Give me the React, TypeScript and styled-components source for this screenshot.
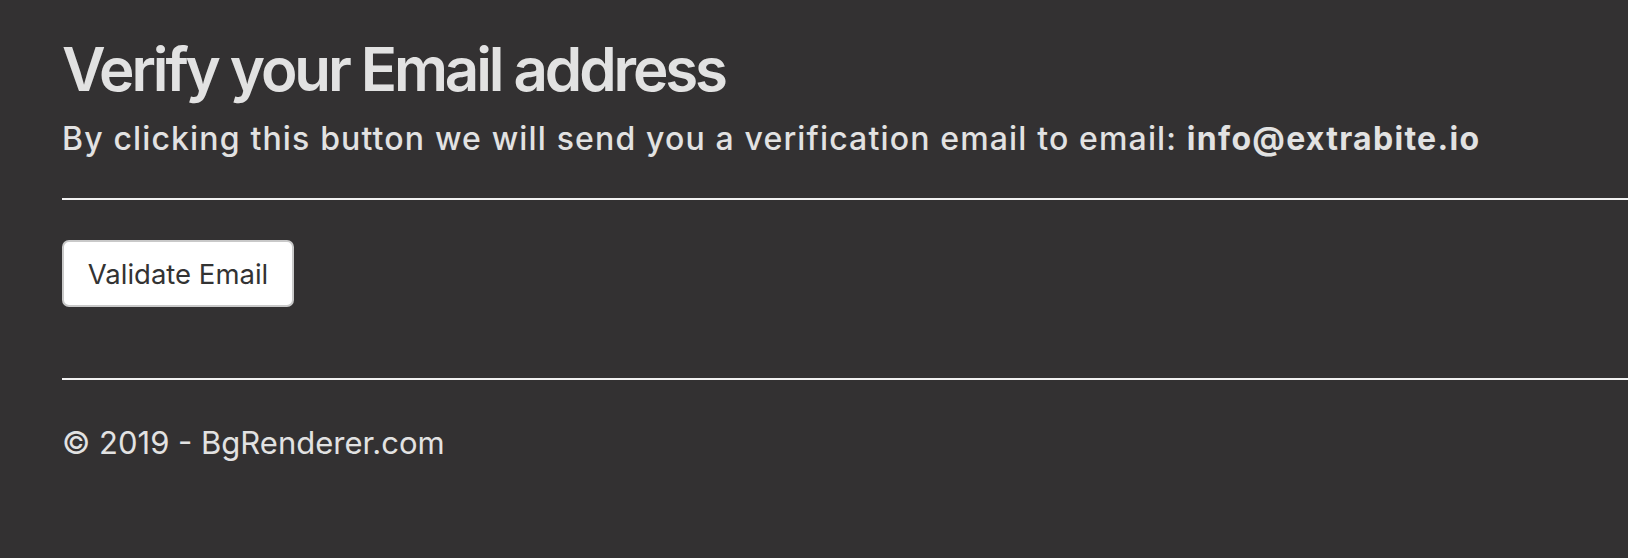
import React from "react";
import styled, { createGlobalStyle } from "styled-components";

const GlobalStyle = createGlobalStyle`
  html, body {
    margin: 0;
    padding: 0;
    background: #333132;
  }
  body {
    font-family: Inter, "Noto Sans", sans-serif;
    color: #e2e2e2;
  }
`;

const Page = styled.main`
  padding: 33px 0 60px 62px;
  min-height: 558px;
  box-sizing: border-box;
`;

const Title = styled.h1`
  margin: 0;
  font-size: 60px;
  line-height: 72px;
  font-weight: 600;
  letter-spacing: -3.1px;
  color: #e2e2e2;
`;

const Lead = styled.p`
  margin: 15px 0 0;
  font-size: 32px;
  line-height: 38px;
  font-weight: 500;
  letter-spacing: 1.15px;
  color: #e2e2e2;

  strong {
    font-weight: 700;
    letter-spacing: 1.3px;
  }
`;

const Rule = styled.hr<{ $top: number }>`
  margin: ${(p) => p.$top}px 0 0;
  border: 0;
  height: 2px;
  background: #f2f2f2;
`;

const Button = styled.button`
  margin-top: 40px;
  width: 232px;
  height: 67px;
  box-sizing: border-box;
  background: #ffffff;
  border: 2px solid #c9c9c9;
  border-radius: 7px;
  font-family: Inter, "Noto Sans", sans-serif;
  font-size: 27.5px;
  color: #333333;
  padding: 0;
  cursor: pointer;
`;

const Footer = styled.footer`
  margin-top: 45px;
  font-size: 31px;
  line-height: 36px;
  color: #e2e2e2;
`;

export default function App() {
  return (
    <>
      <GlobalStyle />
      <Page>
        <Title>Verify your Email address</Title>
        <Lead>
          By clicking this button we will send you a verification email to email:{" "}
          <strong>info@extrabite.io</strong>
        </Lead>
        <Rule $top={40} />
        <Button type="button">Validate Email</Button>
        <Rule $top={71} />
        <Footer>© 2019 - BgRenderer.com</Footer>
      </Page>
    </>
  );
}
